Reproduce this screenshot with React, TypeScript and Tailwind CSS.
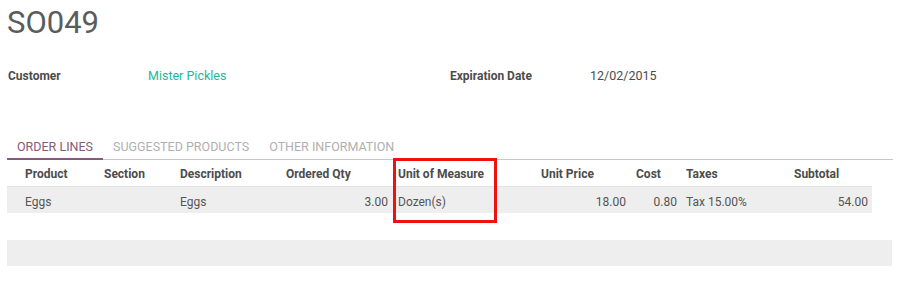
import React from "react";

const headers = [
  { t: "Product", c: "pl-[18px]" },
  { t: "Section", c: "pl-[7px]" },
  { t: "Description", c: "pl-[8px]" },
  { t: "Ordered Qty", c: "pl-[7px]" },
  { t: "Unit of Measure", c: "pl-[5px]" },
  { t: "Unit Price", c: "pl-[41px]" },
  { t: "Cost", c: "pl-[6px]" },
  { t: "Taxes", c: "pl-[5px]" },
  { t: "Subtotal", c: "pl-[14px]" },
];

const cells = [
  { t: "Eggs", c: "pl-[18px]" },
  { t: "", c: "" },
  { t: "Eggs", c: "pl-[8px]" },
  { t: "3.00", c: "text-right pr-[5px]" },
  { t: "Dozen(s)", c: "pl-[5px]" },
  { t: "18.00", c: "text-right pr-[4px]" },
  { t: "0.80", c: "text-right pr-[4px]" },
  { t: "Tax 15.00%", c: "pl-[5px]" },
  { t: "54.00", c: "text-right pr-[4px]" },
];

export default function App() {
  return (
    <div
      className="w-[900px] h-[287px] bg-white overflow-hidden px-[7px]"
      style={{ fontFamily: "Roboto, 'Liberation Sans', sans-serif" }}
    >
      <div className="text-[31px] leading-[46px] text-[#5b5b5b]">SO049</div>

      <div className="mt-[20px] flex h-[20px] items-center">
        <div className="flex w-[442px] items-center">
          <div className="w-[141px] pl-[1px] text-[12px] font-bold text-[#4c4c4c]">Customer</div>
          <div className="text-[12.5px] text-[#21b799]">Mister Pickles</div>
        </div>
        <div className="flex items-center">
          <div className="w-[141px] pl-[1px] text-[12px] font-bold text-[#4c4c4c]">Expiration Date</div>
          <div className="text-[12.5px] text-[#4c4c4c]">12/02/2015</div>
        </div>
      </div>

      <div className="mt-[50px] flex h-[24px] border-b border-[#c8c8c8] text-[12.5px] uppercase">
        <div className="-mb-px border-b-2 border-[#875a7b] px-[10px] pt-[1px] leading-[20px] text-[#875a7b]">
          Order Lines
        </div>
        <div className="px-[10px] pt-[1px] leading-[20px] text-[#b0b0b0]">Suggested Products</div>
        <div className="px-[10px] pt-[1px] leading-[20px] text-[#b0b0b0]">Other Information</div>
      </div>

      <div className="relative w-[865px] text-[12px]">
        <div className="grid h-[27px] grid-cols-[90px_75px_107px_114px_107px_130px_51px_99px_92px] items-center border-b border-[#e2e2e2] pt-[2px] font-bold text-[#4c4c4c]">
          {headers.map((h, i) => (
            <div key={i} className={h.c}>
              {h.t}
            </div>
          ))}
        </div>
        <div className="grid h-[26px] grid-cols-[90px_75px_107px_114px_107px_130px_51px_99px_92px] items-center bg-[#eeeeee] pt-[3px] text-[#555555]">
          {cells.map((c, i) => (
            <div key={i} className={c.c}>
              {c.t}
            </div>
          ))}
        </div>
        <div className="absolute left-[386px] top-[-2px] h-[65px] w-[104px] border-[3px] border-[#ee1111]" />
      </div>

      <div className="mt-[27px] h-[26px] w-[885px] bg-[#eeeeee]" />
    </div>
  );
}
